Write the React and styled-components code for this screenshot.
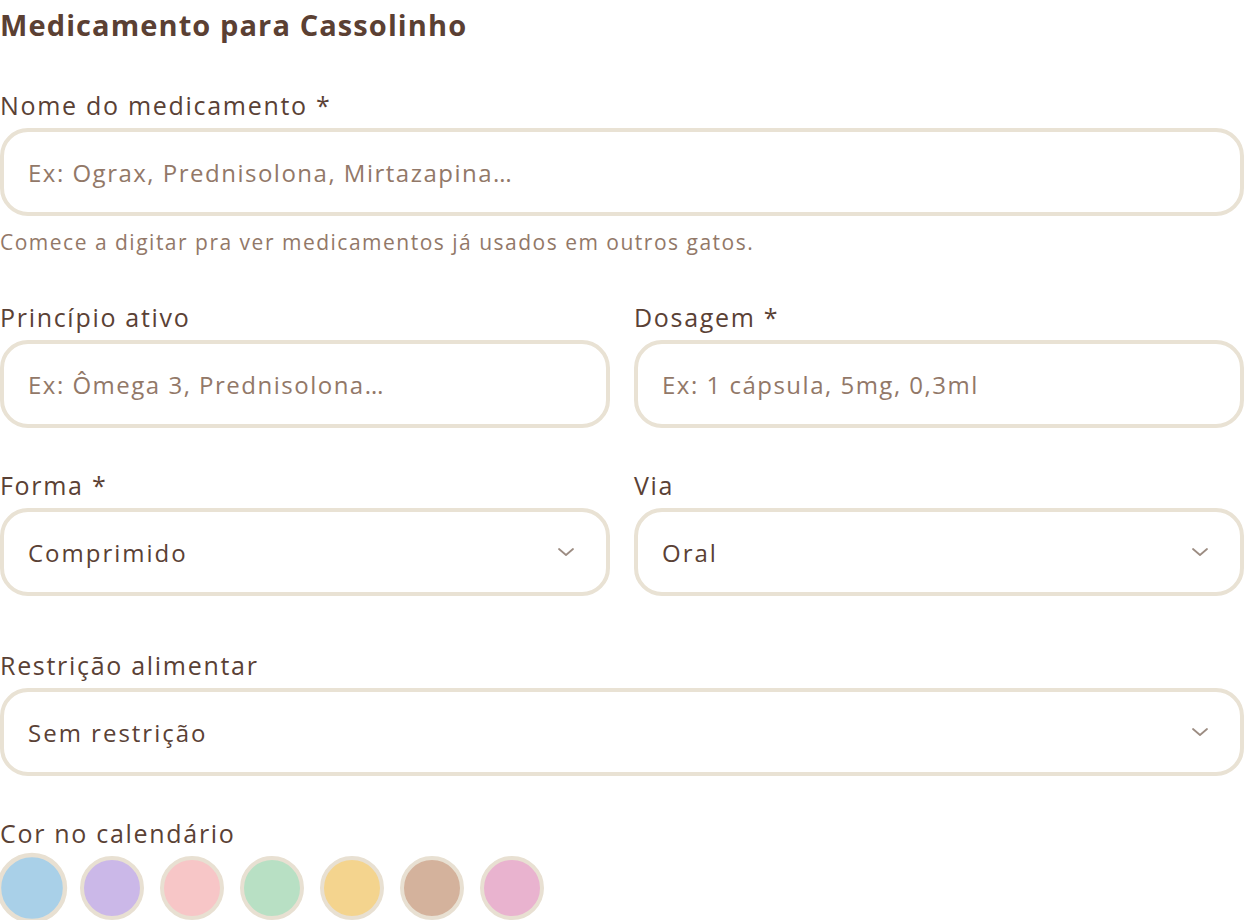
import React from 'react'
import styled, { createGlobalStyle } from 'styled-components'

const GlobalStyle = createGlobalStyle`
  html, body {
    margin: 0;
    padding: 0;
    background: #ffffff;
  }
  body {
    font-family: "Open Sans", Lato, sans-serif;
    color: #5a4135;
  }
  * { box-sizing: border-box; }
`

const colors = ['#a9d0e8', '#cbb8e8', '#f7c6c7', '#b8e0c4', '#f4d48e', '#d4b29c', '#e9b3cf']

function Chevron() {
    return (
        <ChevronIcon viewBox="0 0 24 24" width="24" height="24">
            <path d="M5 9l7 6 7-6" fill="none" stroke="#9c8c82" strokeWidth="1.8" strokeLinecap="round" strokeLinejoin="round" />
        </ChevronIcon>
    )
}

function SelectField({ label, value, options }) {
    return (
        <Field>
            <Label>{label}</Label>
            <SelectWrap>
                <Select defaultValue={value}>
                    {options.map(o => <option key={o}>{o}</option>)}
                </Select>
                <Chevron />
            </SelectWrap>
        </Field>
    )
}

function App() {
    return (
        <>
        <GlobalStyle />
        <Wrap>
            <Title>Medicamento para Cassolinho</Title>

            <Field top={42}>
                <Label>Nome do medicamento *</Label>
                <Input placeholder="Ex: Ograx, Prednisolona, Mirtazapina…" />
                <Helper>Comece a digitar pra ver medicamentos já usados em outros gatos.</Helper>
            </Field>

            <Row top={48}>
                <Field>
                    <Label>Princípio ativo</Label>
                    <Input placeholder="Ex: Ômega 3, Prednisolona…" />
                </Field>
                <Field>
                    <Label>Dosagem *</Label>
                    <Input placeholder="Ex: 1 cápsula, 5mg, 0,3ml" />
                </Field>
            </Row>

            <Row top={44}>
                <SelectField label="Forma *" value="Comprimido" options={['Comprimido', 'Cápsula', 'Líquido', 'Pasta']} />
                <SelectField label="Via" value="Oral" options={['Oral', 'Tópica', 'Injetável']} />
            </Row>

            <Row top={56} single>
                <SelectField label="Restrição alimentar" value="Sem restrição" options={['Sem restrição', 'Em jejum', 'Com comida']} />
            </Row>

            <Field top={44}>
                <Label>Cor no calendário</Label>
                <Swatches>
                    {colors.map((c, i) => (
                        <Swatch key={c} color={c} selected={i === 0} />
                    ))}
                </Swatches>
            </Field>
        </Wrap>
        </>
    )
}

const Wrap = styled.div`
    width: 1244px;
    display: flex;
    flex-direction: column;
`
const Title = styled.h2`
    margin: 0;
    font-size: 29px;
    line-height: 50px;
    font-weight: 700;
    letter-spacing: 1.1px;
    color: #5b4033;
`
const Field = styled.div`
    display: flex;
    flex-direction: column;
    min-width: 0;
    margin-top: ${props => props.top || 0}px;
`
const Label = styled.label`
    font-size: 25px;
    line-height: 26px;
    margin-bottom: 10px;
    font-weight: 400;
    letter-spacing: 1.7px;
    color: #5a4135;
`
const Input = styled.input`
    height: 88px;
    width: 100%;
    border: 4px solid #e9e2d4;
    border-radius: 28px;
    padding: 0 24px;
    font-family: inherit;
    font-size: 24px;
    font-weight: 400;
    letter-spacing: 1.5px;
    color: #5a4135;
    background: #fff;
    outline: none;
    &::placeholder {
        color: #927868;
    }
`
const Helper = styled.p`
    margin: 12px 0 0;
    font-size: 21px;
    line-height: 28px;
    font-weight: 400;
    letter-spacing: 1.5px;
    color: #927868;
`
const Row = styled.div`
    display: grid;
    grid-template-columns: ${props => props.single ? '1fr' : '1fr 1fr'};
    gap: 24px;
    margin-top: ${props => props.top || 0}px;
`
const SelectWrap = styled.div`
    position: relative;
`
const Select = styled.select`
    appearance: none;
    height: 88px;
    width: 100%;
    border: 4px solid #e9e2d4;
    border-radius: 28px;
    padding: 0 24px;
    font-family: inherit;
    font-size: 24px;
    font-weight: 400;
    letter-spacing: 2px;
    color: #5a4135;
    background: #fff;
    outline: none;
`
const ChevronIcon = styled.svg`
    position: absolute;
    right: 32px;
    top: 50%;
    transform: translateY(-50%);
    pointer-events: none;
`
const Swatches = styled.div`
    display: flex;
    gap: 16px;
`
const Swatch = styled.button`
    width: 64px;
    height: 64px;
    border-radius: 50%;
    border: 4px solid #e8e0d2;
    background: ${props => props.color};
    padding: 0;
    cursor: pointer;
    transform: ${props => props.selected ? 'scale(1.1)' : 'none'};
    flex-shrink: 0;
`

export default App
